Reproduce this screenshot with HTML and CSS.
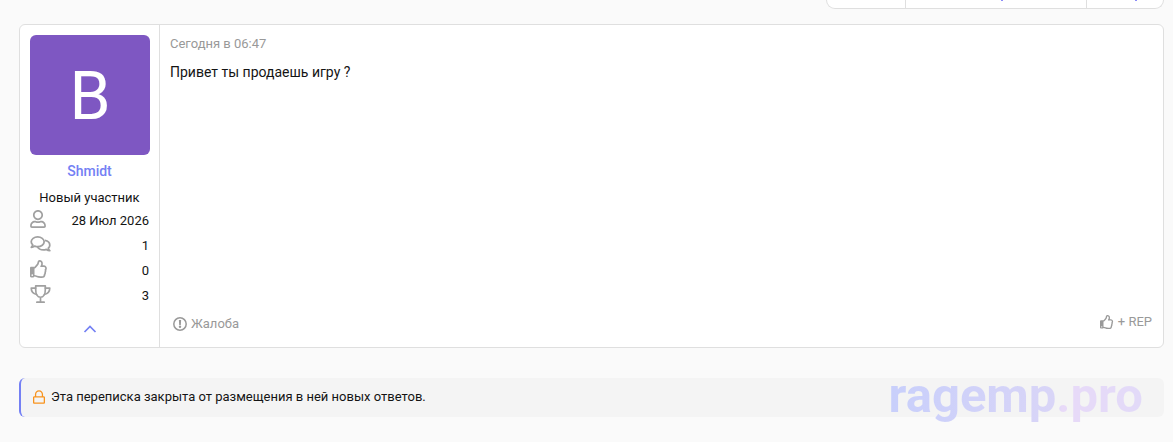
FILE: index.html
```html
<!DOCTYPE html>
<html lang="ru">
<head>
<meta charset="utf-8">
<title>Переписка</title>
<link rel="stylesheet" href="styles.css">
</head>
<body>
<svg class="sprite" aria-hidden="true">
  <symbol id="thumb" viewBox="0 0 512 512">
    <path fill="currentColor" d="M466.270 286.690C475.040 271.840 480 256 480 236.850c0-44.015-37.218-85.580-85.820-85.580H357.700c4.920-12.810 8.850-28.130 8.850-46.540C366.550 31.936 328.860 0 271.280 0c-61.607 0-58.093 94.933-71.760 108.600-22.747 22.747-49.615 66.447-68.760 83.400H32c-17.673 0-32 14.327-32 32v240c0 17.673 14.327 32 32 32h64c14.893 0 27.408-10.174 30.978-23.950 44.509 1.001 75.060 39.940 177.802 39.940 7.220 0 15.220.010 22.220.010 77.117 0 111.986-39.423 112.940-95.330 13.319-18.425 20.299-43.122 17.340-66.990 9.854-18.452 13.664-40.343 8.990-62.990zm-61.750 53.830c12.560 21.130 1.260 49.410-13.940 57.570 7.700 48.780-17.608 65.900-53.120 65.900h-37.820c-71.639 0-118.029-37.820-171.640-37.820V240h10.920c28.360 0 67.980-70.890 94.540-97.460 28.360-28.360 18.910-75.630 37.820-94.540 47.270 0 47.270 32.980 47.270 56.730 0 39.170-28.360 56.720-28.360 94.540h103.990c21.110 0 37.730 18.910 37.820 37.820.090 18.900-12.820 37.810-22.270 37.810 13.489 14.555 16.371 45.236-5.210 65.620zM88 432c0 13.255-10.745 24-24 24s-24-10.745-24-24 10.745-24 24-24 24 10.745 24 24z"/>
  </symbol>
</svg>
<nav class="toolbar" aria-label="Действия">
  <a class="tool tool-small" href="#" aria-label="Изменить"></a>
  <a class="tool tool-wide" href="#" aria-label="Пометить"><i class="tail"></i></a>
  <a class="tool tool-last" href="#" aria-label="Покинуть"><i class="tail"></i></a>
</nav>
<main>
  <article class="message">
    <aside class="user">
      <a class="avatar" href="#">B</a>
      <a class="name" href="#">Shmidt</a>
      <div class="title">Новый участник</div>
      <dl class="stats">
        <div class="stat">
          <dt><svg class="icon" width="16" height="18" viewBox="0 0 448 512" aria-label="Регистрация"><path fill="currentColor" d="M313.600 304c-28.700 0-42.500 16-89.600 16-47.100 0-60.800-16-89.600-16C60.200 304 0 364.200 0 438.400V464c0 26.500 21.500 48 48 48h352c26.500 0 48-21.500 48-48v-25.600c0-74.200-60.200-134.400-134.400-134.400zM400 464H48v-25.600c0-47.600 38.800-86.400 86.400-86.400 14.600 0 38.300 16 89.600 16 51.700 0 74.900-16 89.600-16 47.600 0 86.400 38.800 86.400 86.400V464zM224 288c79.500 0 144-64.500 144-144S303.500 0 224 0 80 64.500 80 144s64.500 144 144 144zm0-240c52.900 0 96 43.100 96 96s-43.100 96-96 96-96-43.100-96-96 43.100-96 96-96z"/></svg></dt>
          <dd>28 Июл 2026</dd>
        </div>
        <div class="stat">
          <dt><svg class="icon" width="21" height="18" viewBox="0 0 576 512" aria-label="Сообщения"><g fill="none" stroke="currentColor" stroke-width="50" stroke-linejoin="round"><path d="M208 55c102 0 184 62 184 138s-82 138-184 138c-30 0-58-6-84-16-28 20-60 32-98 34 18-18 34-44 42-70-28-24-44-54-44-86 0-76 82-138 184-138z"/><path d="M414 154c80 14 138 66 138 134 0 34-16 62-42 86 8 28 22 54 42 70-38 0-70-14-98-34-26 10-52 16-84 16-76 0-140-34-168-86"/></g></svg></dt>
          <dd>1</dd>
        </div>
        <div class="stat">
          <dt><svg class="icon" width="18" height="18" aria-label="Реакции"><use href="#thumb"/></svg></dt>
          <dd>0</dd>
        </div>
        <div class="stat">
          <dt><svg class="icon" width="21" height="18" viewBox="0 0 576 512" aria-label="Баллы"><g fill="none" stroke="currentColor" stroke-width="48" stroke-linejoin="round" stroke-linecap="round"><path d="M151 24h274v105c0 124-52 220-137 220S151 252 151 128zM288 348v140M184 488h208"/><path d="M151 87H24c0 106 60 164 156 182M425 87h127c0 106-60 164-156 182"/></g></svg></dt>
          <dd>3</dd>
        </div>
      </dl>
      <button class="toggle" type="button" aria-label="Свернуть"><svg class="icon" width="14" height="8" viewBox="0 0 14 8"><path d="M1.500 7L7 1.500 12.500 7" fill="none" stroke="currentColor" stroke-width="1.700"/></svg></button>
    </aside>
    <section class="content">
      <a class="date" href="#"><time>Сегодня в 06:47</time></a>
      <p class="text">Привет ты продаешь игру ?</p>
      <footer class="actions">
        <a class="action" href="#"><svg class="icon" width="14" height="14" viewBox="0 0 14 14"><circle cx="7" cy="7" r="6.200" fill="none" stroke="currentColor" stroke-width="1.500"/><path d="M5.900 3h2.200l-.3 4.900H6.200z" fill="currentColor"/><circle cx="7" cy="9.800" r="1.200" fill="currentColor"/></svg>Жалоба</a>
        <a class="action action-rep" href="#"><svg class="icon" width="14" height="14"><use href="#thumb"/></svg>+ REP</a>
      </footer>
    </section>
  </article>
  <div class="notice">
    <svg class="icon lock" width="12" height="14" viewBox="0 0 448 512"><path fill="currentColor" d="M400 224h-24v-72C376 68.200 307.800 0 224 0S72 68.200 72 152v72H48c-26.500 0-48 21.500-48 48v192c0 26.500 21.500 48 48 48h352c26.500 0 48-21.500 48-48V272c0-26.500-21.500-48-48-48zM120 152c0-57.300 46.700-104 104-104s104 46.700 104 104v72H120v-72zM400 464H48V272h352v192z"/></svg>
    <span>Эта переписка закрыта от размещения в ней новых ответов.</span>
  </div>
</main>
<div class="watermark">ragemp.pro</div>
</body>
</html>
```
FILE: styles.css
```css
* { box-sizing: border-box; }
body {
  margin: 0;
  padding: 0 9px 0 19px;
  background: #fafafa;
  color: #141414;
  font: 13px/18px Roboto, "Noto Sans", sans-serif;
}
a { color: inherit; text-decoration: none; }
.sprite { display: none; }
.icon { display: block; flex: none; }

.toolbar {
  display: flex;
  width: 338px;
  height: 9px;
  margin-left: auto;
  background: #fff;
  border: 1px solid #dfdfdf;
  border-top: 0;
  border-radius: 0 0 16px 16px;
}
.tool {
  display: flex;
  justify-content: center;
  border-right: 1px solid #dfdfdf;
}
.tool-small { width: 79px; }
.tool-wide { width: 181px; padding-left: 12px; }
.tool-last { flex: 1; border-right: 0; padding-left: 22px; }
.tail { width: 2px; height: 1px; background: #8c8cf8; }

.message {
  display: flex;
  margin-top: 15px;
  background: #fff;
  border: 1px solid #dfdfdf;
  border-radius: 6px;
}
.user {
  display: flex;
  flex-direction: column;
  flex: none;
  width: 140px;
  padding: 10px 10px 6px;
  border-right: 1px solid #dfdfdf;
}
.avatar {
  display: flex;
  align-items: center;
  justify-content: center;
  width: 120px;
  height: 120px;
  padding-top: 4px;
  border-radius: 6px;
  background: #7e57c2;
  color: #fff;
  font-size: 66px;
  line-height: 116px;
}
.name {
  margin-top: 6px;
  color: #7480f4;
  font-size: 14px;
  font-weight: 500;
  line-height: 20px;
  text-align: center;
}
.title { margin-top: 8px; text-align: center; }
.stats { margin: 1px 0 0; }
.stat {
  display: flex;
  justify-content: space-between;
  height: 25px;
}
.stat dt { padding-top: 2px; color: #a0a0a0; }
.stat dd { margin: 0; padding-top: 4px; }
.toggle {
  display: flex;
  justify-content: center;
  width: 100%;
  margin-top: 11px;
  padding: 6px 0 8px;
  border: 0;
  background: none;
  color: #7480f4;
}

.content {
  display: flex;
  flex: 1;
  flex-direction: column;
  padding: 10px 11px 14px 10px;
}
.date { color: #999; }
.text { margin: 9px 0 0; font-size: 14px; line-height: 20px; }
.actions {
  display: flex;
  justify-content: space-between;
  align-items: flex-end;
  margin-top: auto;
  padding-left: 3px;
  color: #999;
}
.action { display: flex; align-items: center; gap: 4px; }
.action-rep { padding-bottom: 2px; }

.notice {
  display: flex;
  align-items: center;
  gap: 6px;
  margin-top: 30px;
  padding: 9px 12px 11px;
  border-left: 2px solid #7480f4;
  border-radius: 6px;
  background: #f4f4f4;
  line-height: 19px;
}
.lock { color: #f7931e; }

.watermark {
  position: fixed;
  right: 30px;
  bottom: 18px;
  background: linear-gradient(90deg, #c8cffb, #d9d5f7 66%, #e8daf8 68%, #e2daf8);
  background-clip: text;
  -webkit-background-clip: text;
  color: transparent;
  font-size: 49px;
  font-weight: 700;
  line-height: 56px;
}
```
